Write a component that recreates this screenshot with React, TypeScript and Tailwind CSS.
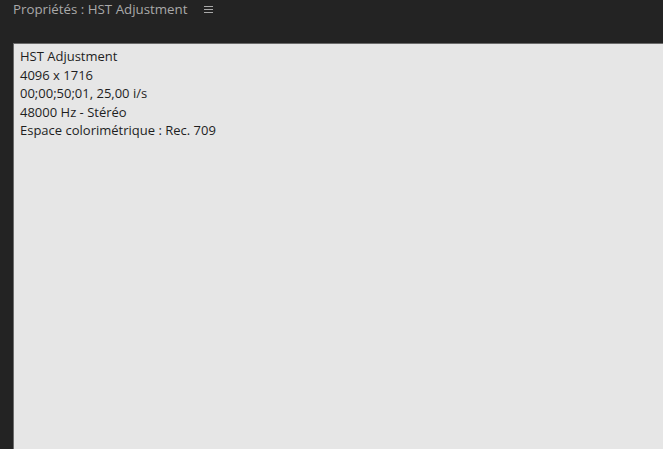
export default function App() {
  return (
    <div className="w-[663px] h-[449px] bg-[#232323] flex flex-col overflow-hidden" style={{ fontFamily: '"Open Sans", "Noto Sans", sans-serif' }}>
      <div className="h-[43px] shrink-0 flex items-start pl-[13px] pt-[0px]">
        <span className="text-[13.3px] leading-[19px] text-[#a9a9a9]">Propriétés : HST Adjustment</span>
        <span className="ml-[17px] mt-[6px] flex flex-col gap-[2px] w-[9px]">
          <span className="h-[1px] bg-[#a9a9a9]"></span>
          <span className="h-[1px] bg-[#a9a9a9]"></span>
          <span className="h-[1px] bg-[#a9a9a9]"></span>
        </span>
      </div>
      <div className="flex-1 ml-[13px] bg-[#e6e6e6] border-l border-t border-[#6a6a6a] pl-[6px] pt-[3px] text-[13px] leading-[18.5px] text-[#1e1e1e]">
        <div>HST Adjustment</div>
        <div>4096 x 1716</div>
        <div>00;00;50;01, 25,00 i/s</div>
        <div>48000 Hz - Stéréo</div>
        <div>Espace colorimétrique : Rec. 709</div>
      </div>
    </div>
  );
}
